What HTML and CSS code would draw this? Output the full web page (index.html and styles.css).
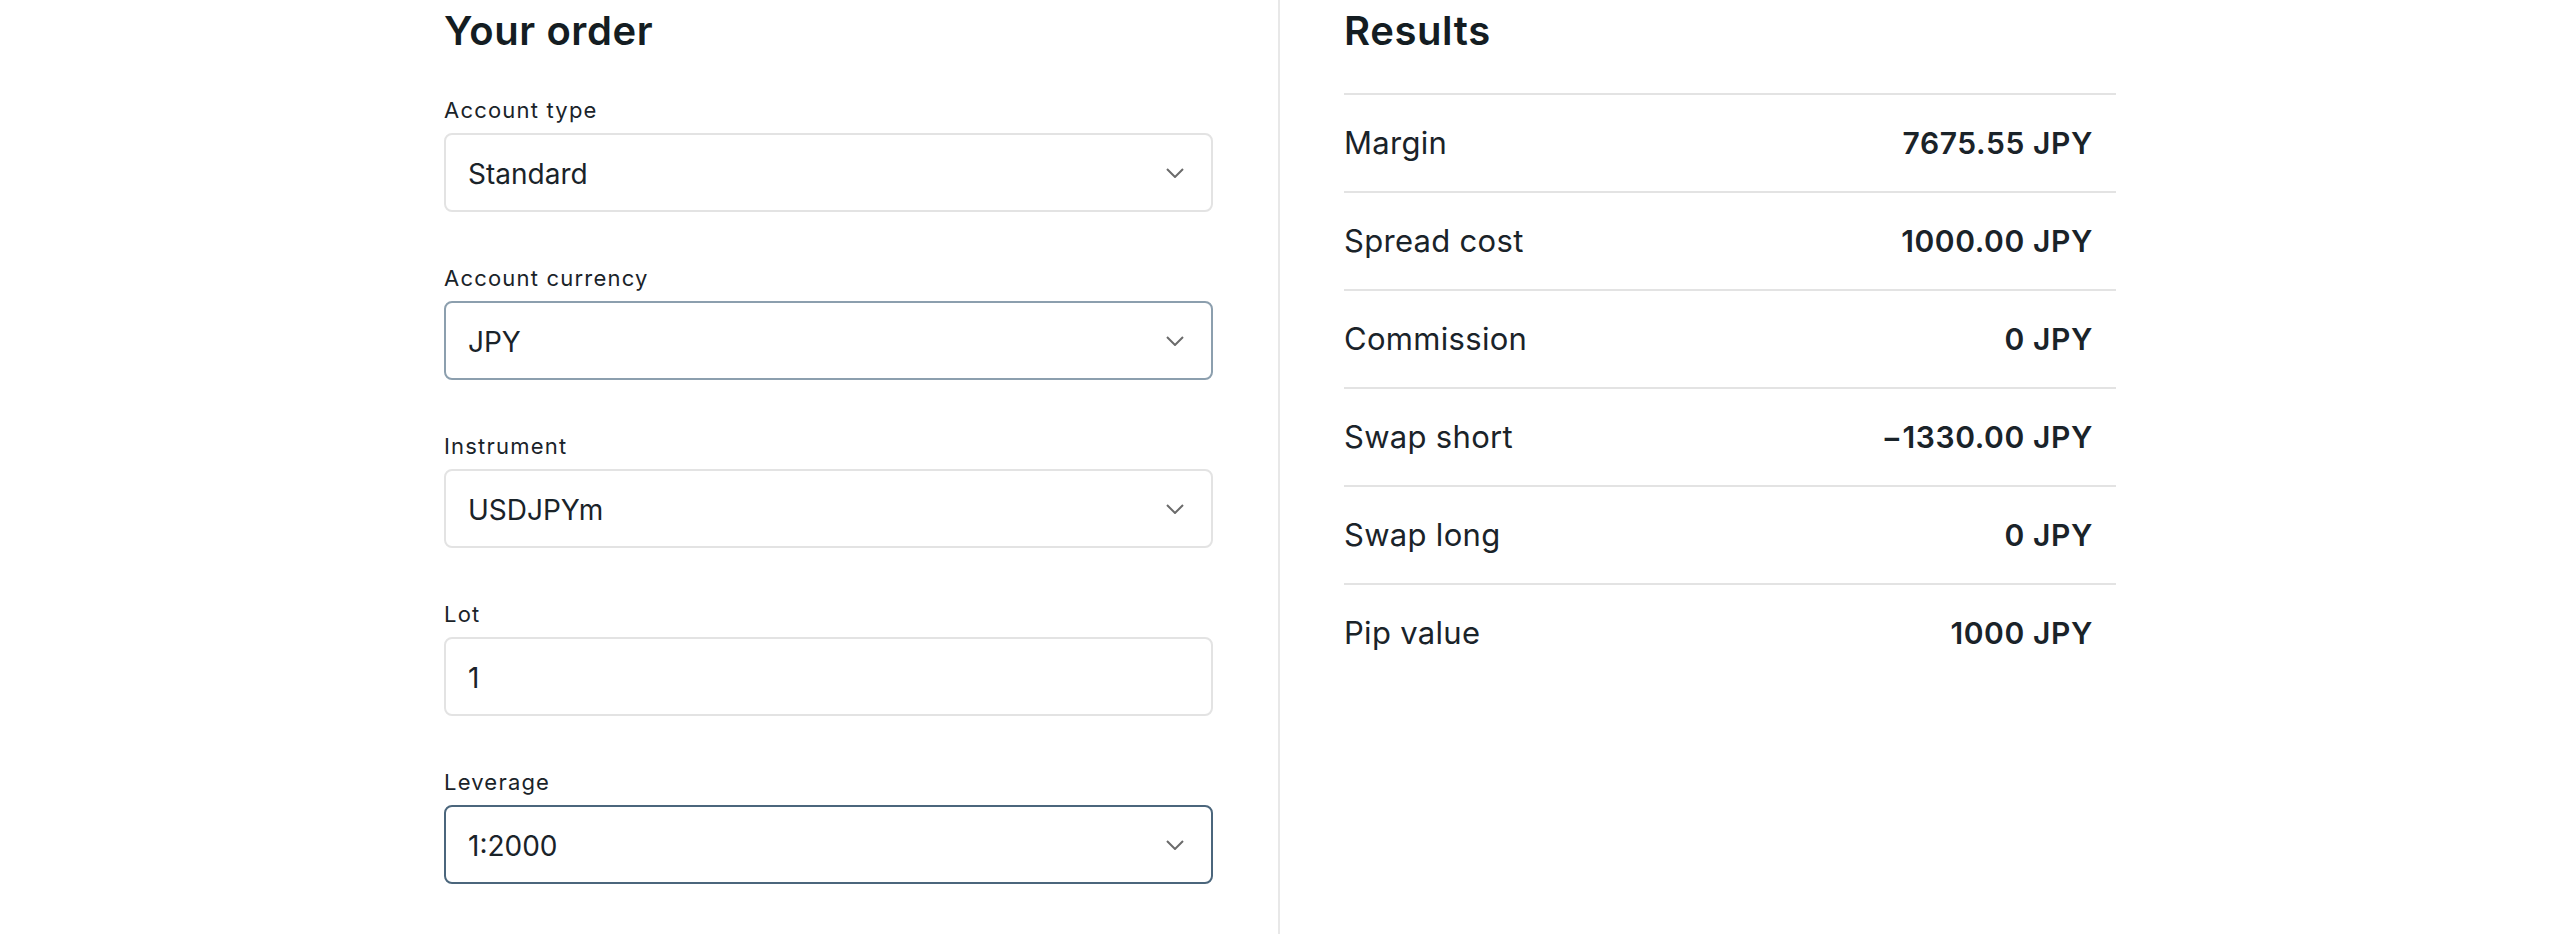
FILE: index.html
```html
<!DOCTYPE html>
<html lang="en">
<head>
  <meta charset="UTF-8">
  <meta name="viewport" content="width=device-width, initial-scale=1.0">
  <title>Calculator</title>
  <link rel="stylesheet" href="styles.css">
</head>
<body>
  <div class="calculator">
    <div class="order">
      <h2>Your order</h2>

      <div class="field">
        <label>Account type</label>
        <div class="select">
          <span>Standard</span>
          <svg class="chevron" viewBox="0 0 18 10"><path d="M1 1l8 8 8-8"/></svg>
        </div>
      </div>

      <div class="field">
        <label>Account currency</label>
        <div class="select hover">
          <span>JPY</span>
          <svg class="chevron" viewBox="0 0 18 10"><path d="M1 1l8 8 8-8"/></svg>
        </div>
      </div>

      <div class="field">
        <label>Instrument</label>
        <div class="select">
          <span>USDJPYm</span>
          <svg class="chevron" viewBox="0 0 18 10"><path d="M1 1l8 8 8-8"/></svg>
        </div>
      </div>

      <div class="field">
        <label for="lot">Lot</label>
        <input type="text" id="lot" class="input" value="1">
      </div>

      <div class="field">
        <label>Leverage</label>
        <div class="select active">
          <span>1:2000</span>
          <svg class="chevron" viewBox="0 0 18 10"><path d="M1 1l8 8 8-8"/></svg>
        </div>
      </div>
    </div>

    <div class="results">
      <h2>Results</h2>
      <div class="rows">
        <div class="row"><span class="name">Margin</span><span class="value">7675.55 JPY</span></div>
        <div class="row"><span class="name">Spread cost</span><span class="value">1000.00 JPY</span></div>
        <div class="row"><span class="name">Commission</span><span class="value">0 JPY</span></div>
        <div class="row"><span class="name">Swap short</span><span class="value">&minus;1330.00 JPY</span></div>
        <div class="row"><span class="name">Swap long</span><span class="value">0 JPY</span></div>
        <div class="row"><span class="name">Pip value</span><span class="value">1000 JPY</span></div>
      </div>
    </div>
  </div>
</body>
</html>
```

FILE: styles.css
```css
body {
  margin: 0;
  padding: 0;
  background: #fff;
  font-family: 'Inter', 'Noto Sans', sans-serif;
  color: #1a2329;
}

.calculator {
  width: 1672px;
  margin: 0 auto;
  display: grid;
  grid-template-columns: 1fr 1fr;
  min-height: 934px;
}

h2 {
  margin: 0;
  padding-top: 7px;
  font-size: 40px;
  line-height: 48px;
  font-weight: 600;
  letter-spacing: 0.6px;
  color: #141d22;
}

.order {
  padding-right: 65px;
  border-right: 2px solid #e8e8e8;
}

.order h2 {
  margin-bottom: 42px;
}

.field {
  margin-bottom: 53px;
}

label {
  display: block;
  margin-bottom: 10px;
  font-size: 22px;
  line-height: 26px;
  letter-spacing: 1.2px;
  color: #1a2329;
}

.select,
.input {
  box-sizing: border-box;
  width: 100%;
  height: 79px;
  border: 2px solid #e3e3e3;
  border-radius: 8px;
  background: #fff;
  font-family: inherit;
  font-size: 28px;
  color: #1a2329;
}

.select {
  display: flex;
  align-items: center;
  justify-content: space-between;
  padding: 0 27px 0 22px;
  line-height: 34px;
}

.select span {
  padding-top: 3px;
}

.select.hover {
  border-color: #8c9fae;
}

.select.active {
  border-color: #4b667c;
}

.input {
  display: block;
  padding: 3px 22px 0;
  outline: none;
}

.chevron {
  width: 18px;
  height: 10px;
  fill: none;
  stroke: #6b6b6b;
  stroke-width: 2;
}

.results {
  padding-left: 64px;
}

.results h2 {
  margin-bottom: 38px;
}

.row {
  display: flex;
  justify-content: space-between;
  align-items: center;
  height: 98px;
  box-sizing: border-box;
  padding-right: 23px;
  border-top: 2px solid #e3e3e3;
}

.name {
  font-size: 31px;
  line-height: 36px;
  letter-spacing: 0.3px;
}

.value {
  font-size: 30px;
  line-height: 36px;
  font-weight: 600;
  letter-spacing: 0.6px;
}
```
